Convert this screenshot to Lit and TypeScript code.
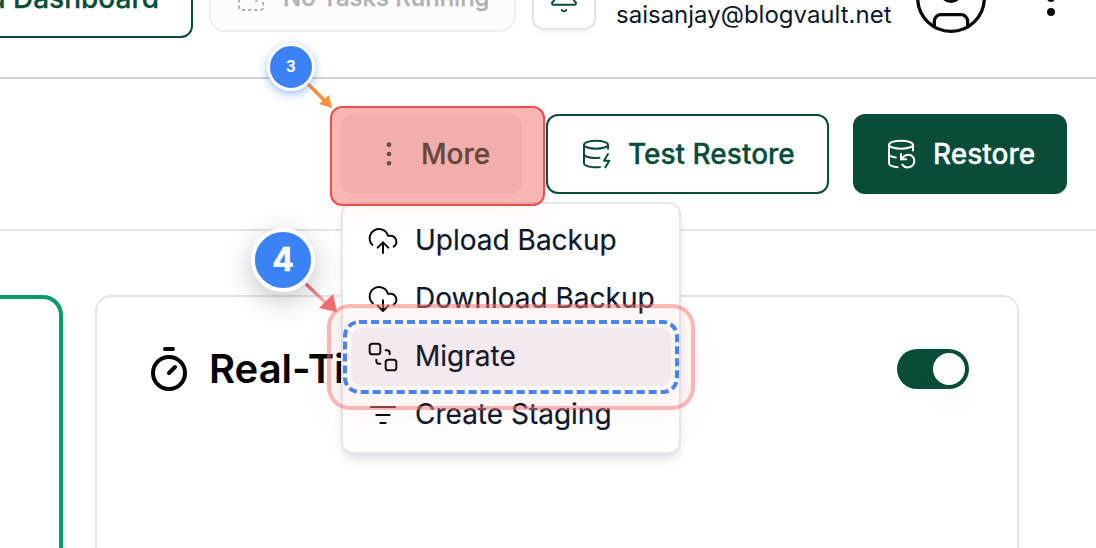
import { LitElement, html, css, svg } from "lit";
import { customElement } from "lit/decorators.js";

const glyph = (body: unknown, size = 32, weight = 1.5) => html`<svg
  width=${size} height=${size} viewBox="0 0 24 24" fill="none" stroke="currentColor"
  stroke-width=${weight} stroke-linecap="round" stroke-linejoin="round">${body}</svg>`;

const icons = {
  tasks: svg`<g stroke-linecap="butt"><path d="M3 13v6a2 2 0 0 0 2 2h14a2 2 0 0 0 2-2v-6" stroke-dasharray="2.6 2"/><path d="M3 13V5a2 2 0 0 1 2-2h14a2 2 0 0 1 2 2v8" stroke-dasharray="2.6 2"/><path d="M9 13l2-1M16 11v4"/></g>`,
  bell: svg`<path d="M10.268 21a2 2 0 0 0 3.464 0"/><path d="M3.262 15.326A1 1 0 0 0 4 17h16a1 1 0 0 0 .74-1.673C19.41 13.956 18 12.499 18 8A6 6 0 0 0 6 8c0 4.499-1.411 5.956-2.738 7.326"/>`,
  user: svg`<circle cx="12" cy="12" r="10"/><circle cx="12" cy="10" r="3"/><path d="M7 20.662V19a2 2 0 0 1 2-2h6a2 2 0 0 1 2 2v1.662"/>`,
  dots: svg`<circle cx="12" cy="5" r="1"/><circle cx="12" cy="12" r="1"/><circle cx="12" cy="19" r="1"/>`,
  dbZap: svg`<ellipse cx="12" cy="5" rx="9" ry="3"/><path d="M3 5V19A9 3 0 0 0 15 21.84M21 5V8M21 12L18 17H22L19 22M3 12A9 3 0 0 0 14.59 14.87"/>`,
  dbBackup: svg`<ellipse cx="12" cy="5" rx="9" ry="3"/><path d="M3 12a9 3 0 0 0 5 2.69M21 9.3V5M3 5v14a9 3 0 0 0 6.47 2.88M12 12v4h4"/><path d="M13 20a5 5 0 0 0 9-3 4.5 4.5 0 0 0-4.5-4.5c-1.33 0-2.54.54-3.41 1.41L12 16"/>`,
  upload: svg`<path d="M12 13v8M4 14.899A7 7 0 1 1 15.71 8h1.79a4.5 4.5 0 0 1 2.5 8.242M8 17l4-4 4 4"/>`,
  download: svg`<path d="M12 13v8l-4-4M12 21l4-4M4.393 15.269A7 7 0 1 1 15.71 8h1.79a4.5 4.5 0 0 1 2.436 8.284"/>`,
  migrate: svg`<rect x="14" y="14" width="8" height="8" rx="2"/><rect x="2" y="2" width="8" height="8" rx="2"/><path d="M7 14v1a2 2 0 0 0 2 2h1M14 7h1a2 2 0 0 1 2 2v1"/>`,
  staging: svg`<path d="M3 6h18M7 12h10M10 18h4"/>`,
  timer: svg`<path d="M10 2h4M12 14l3-3"/><circle cx="12" cy="14" r="8"/>`,
};

@customElement("app-root")
export class AppRoot extends LitElement {
  static styles = css`
    :host {
      display: block;
      position: relative;
      width: 1096px;
      height: 548px;
      overflow: hidden;
      background: #fff;
      color: #0a0a0a;
      font: 400 28px/40px Inter, sans-serif;
      white-space: nowrap;
    }
    * { box-sizing: border-box; }
    svg { display: block; flex: none; }
    .topbar {
      display: flex;
      align-items: center;
      height: 160px;
      margin-top: -81px;
      border-bottom: 2px solid #d1d1d6;
    }
    .btn {
      display: flex;
      align-items: center;
      gap: 16px;
      height: 80px;
      padding: 0 32px;
      border: 2px solid #084c39;
      border-radius: 12px;
      color: #084c39;
      font-weight: 500;
      -webkit-text-stroke: 0.3px currentColor;
      flex: none;
    }
    .dashboard { width: 264px; margin-left: -71px; justify-content: flex-end; }
    .tasks {
      width: 307px;
      height: 68px;
      margin-left: 16px;
      padding: 0 0 0 24px;
      border-color: #efefef;
      border-radius: 16px;
      background: #fcfcfc;
      color: #b1b1b4;
      font-size: 24px;
    }
    .bell {
      width: 64px;
      height: 64px;
      margin-left: 16px;
      padding: 0;
      justify-content: center;
      border-color: #e4e4e7;
      box-shadow: 0 2px 4px rgba(0, 0, 0, 0.06);
    }
    .account { margin-left: 20px; padding-top: 2px; width: 275px; font-size: 24px; line-height: 32px; color: #0f172a; }
    .avatar { margin-left: 20px; }
    .menu-dots { margin-left: 36px; }
    .actions {
      display: flex;
      justify-content: flex-end;
      align-items: center;
      gap: 24px;
      height: 152px;
      padding-right: 29px;
      border-bottom: 2px solid #e4e4e7;
    }
    .more { width: 181px; border: 0; background: #f4f4f5; color: #084c39; }
    .test { width: 283px; }
    .restore { width: 214px; padding: 0 30px; background: #084c39; color: #fff; }
    .cards { display: flex; gap: 32px; margin-top: 64px; height: 400px; }
    .card-active {
      width: 163px;
      margin-left: -100px;
      flex: none;
      border: 4px solid #0a9a68;
      border-radius: 20px;
    }
    .card {
      width: 924px;
      flex: none;
      display: flex;
      align-items: flex-start;
      justify-content: space-between;
      padding: 48px;
      border: 2px solid #e4e4e7;
      border-radius: 16px;
    }
    .title { display: flex; gap: 16px; align-items: center; font-weight: 600; font-size: 40px; line-height: 48px; color: #000; }
    .toggle {
      display: flex;
      justify-content: flex-end;
      width: 72px;
      height: 40px;
      margin-top: 4px;
      padding: 4px;
      border-radius: 20px;
      background: #084c39;
    }
    .thumb {
      width: 32px;
      height: 32px;
      border-radius: 50%;
      background: #fff;
      box-shadow: 0 20px 30px -6px rgba(0, 0, 0, 0.08);
    }
    .dropdown {
      position: absolute;
      left: 341px;
      top: 202px;
      width: 340px;
      height: 252px;
      padding: 8px;
      border: 2px solid #e2e8f0;
      border-radius: 12px;
      background: #fff;
      color: #0f172a;
      box-shadow: 0 8px 12px -2px rgba(0, 0, 0, 0.1), 0 4px 8px -4px rgba(0, 0, 0, 0.08);
    }
    .item { display: flex; align-items: center; gap: 16px; height: 58px; padding: 0 16px; border-radius: 10px; }
    .item span { padding-bottom: 2px; -webkit-text-stroke: 0.2px currentColor; }
    .item svg { color: #0a0a0a; }
    .item.active { background: #f3f4f9; }
    .hl-more {
      position: absolute;
      left: 330px;
      top: 106px;
      width: 215px;
      height: 100px;
      border: 2px solid #ef4d4d;
      border-radius: 12px;
      background: rgba(241, 70, 62, 0.4);
      box-shadow: 0 8px 24px rgba(249, 115, 22, 0.06);
    }
    .hl-migrate {
      position: absolute;
      left: 327px;
      top: 304px;
      width: 368px;
      height: 106px;
      border: 4px solid rgba(248, 113, 113, 0.52);
      border-radius: 23px;
      background: rgba(239, 68, 68, 0.05);
      background-clip: padding-box;
      box-shadow: 0 12px 32px rgba(239, 68, 68, 0.04);
    }
    .marks { position: absolute; left: 0; top: 0; }
    .step {
      position: absolute;
      display: flex;
      align-items: center;
      justify-content: center;
      border-radius: 50%;
      background: #3b82f6;
      color: #fff;
      font-weight: 700;
    }
    .step.three {
      left: 267px;
      top: 43px;
      width: 48px;
      height: 48px;
      padding-bottom: 3px;
      border: 3px solid #fff;
      font-family: Roboto, sans-serif;
      font-size: 17px;
      box-shadow: 0 3px 10px rgba(59, 130, 246, 0.5);
    }
    .step.four {
      left: 251px;
      top: 228px;
      width: 64px;
      height: 64px;
      border: 4px solid #fff;
      font-size: 32px;
      -webkit-text-stroke: 0.5px #fff;
      box-shadow: 0 8px 28px rgba(0, 0, 0, 0.24);
    }
  `;

  render() {
    return html`
      <header class="topbar">
        <div class="btn dashboard">Old Dashboard</div>
        <div class="btn tasks">${glyph(icons.tasks)}<span>No Tasks Running</span></div>
        <div class="btn bell">${glyph(icons.bell)}</div>
        <div class="account"><br />saisanjay@blogvault.net</div>
        <div class="avatar">${glyph(icons.user, 80, 1)}</div>
        <div class="menu-dots">${glyph(icons.dots, 48, 2)}</div>
      </header>
      <section class="actions">
        <div class="btn more">${glyph(icons.dots)}<span>More</span></div>
        <div class="btn test">${glyph(icons.dbZap)}<span>Test Restore</span></div>
        <div class="btn restore">${glyph(icons.dbBackup)}<span>Restore</span></div>
      </section>
      <main class="cards">
        <div class="card-active"></div>
        <div class="card">
          <div class="title">${glyph(icons.timer, 48, 2)}<span>Real-Time</span></div>
          <div class="toggle"><div class="thumb"></div></div>
        </div>
      </main>
      <div class="dropdown">
        <div class="item">${glyph(icons.upload)}<span>Upload Backup</span></div>
        <div class="item">${glyph(icons.download)}<span>Download Backup</span></div>
        <div class="item active">${glyph(icons.migrate)}<span>Migrate</span></div>
        <div class="item">${glyph(icons.staging)}<span>Create Staging</span></div>
      </div>
      <div class="hl-more"></div>
      <div class="hl-migrate"></div>
      <svg class="marks" width="1096" height="548" fill="none">
        <defs>
          <linearGradient id="fade" x1="306" y1="284" x2="332" y2="308" gradientUnits="userSpaceOnUse">
            <stop stop-color="#e66a6a" /><stop offset="1" stop-color="#e66a6a" stop-opacity=".35" />
          </linearGradient>
        </defs>
        <rect x="345" y="322" width="332" height="70" rx="14" stroke="#4b83ef" stroke-width="4" stroke-dasharray="8 4" />
        <path d="M307 83L325 101" stroke="#fb923c" stroke-width="3.5" />
        <path d="M332 108L319 104L329 95Z" fill="#fb923c" />
        <path d="M306 284L328 305" stroke="url(#fade)" stroke-width="3.5" />
        <path d="M337 312L319 308L333 294Z" fill="#f36b6b" />
      </svg>
      <div class="step three">3</div>
      <div class="step four">4</div>
    `;
  }
}
